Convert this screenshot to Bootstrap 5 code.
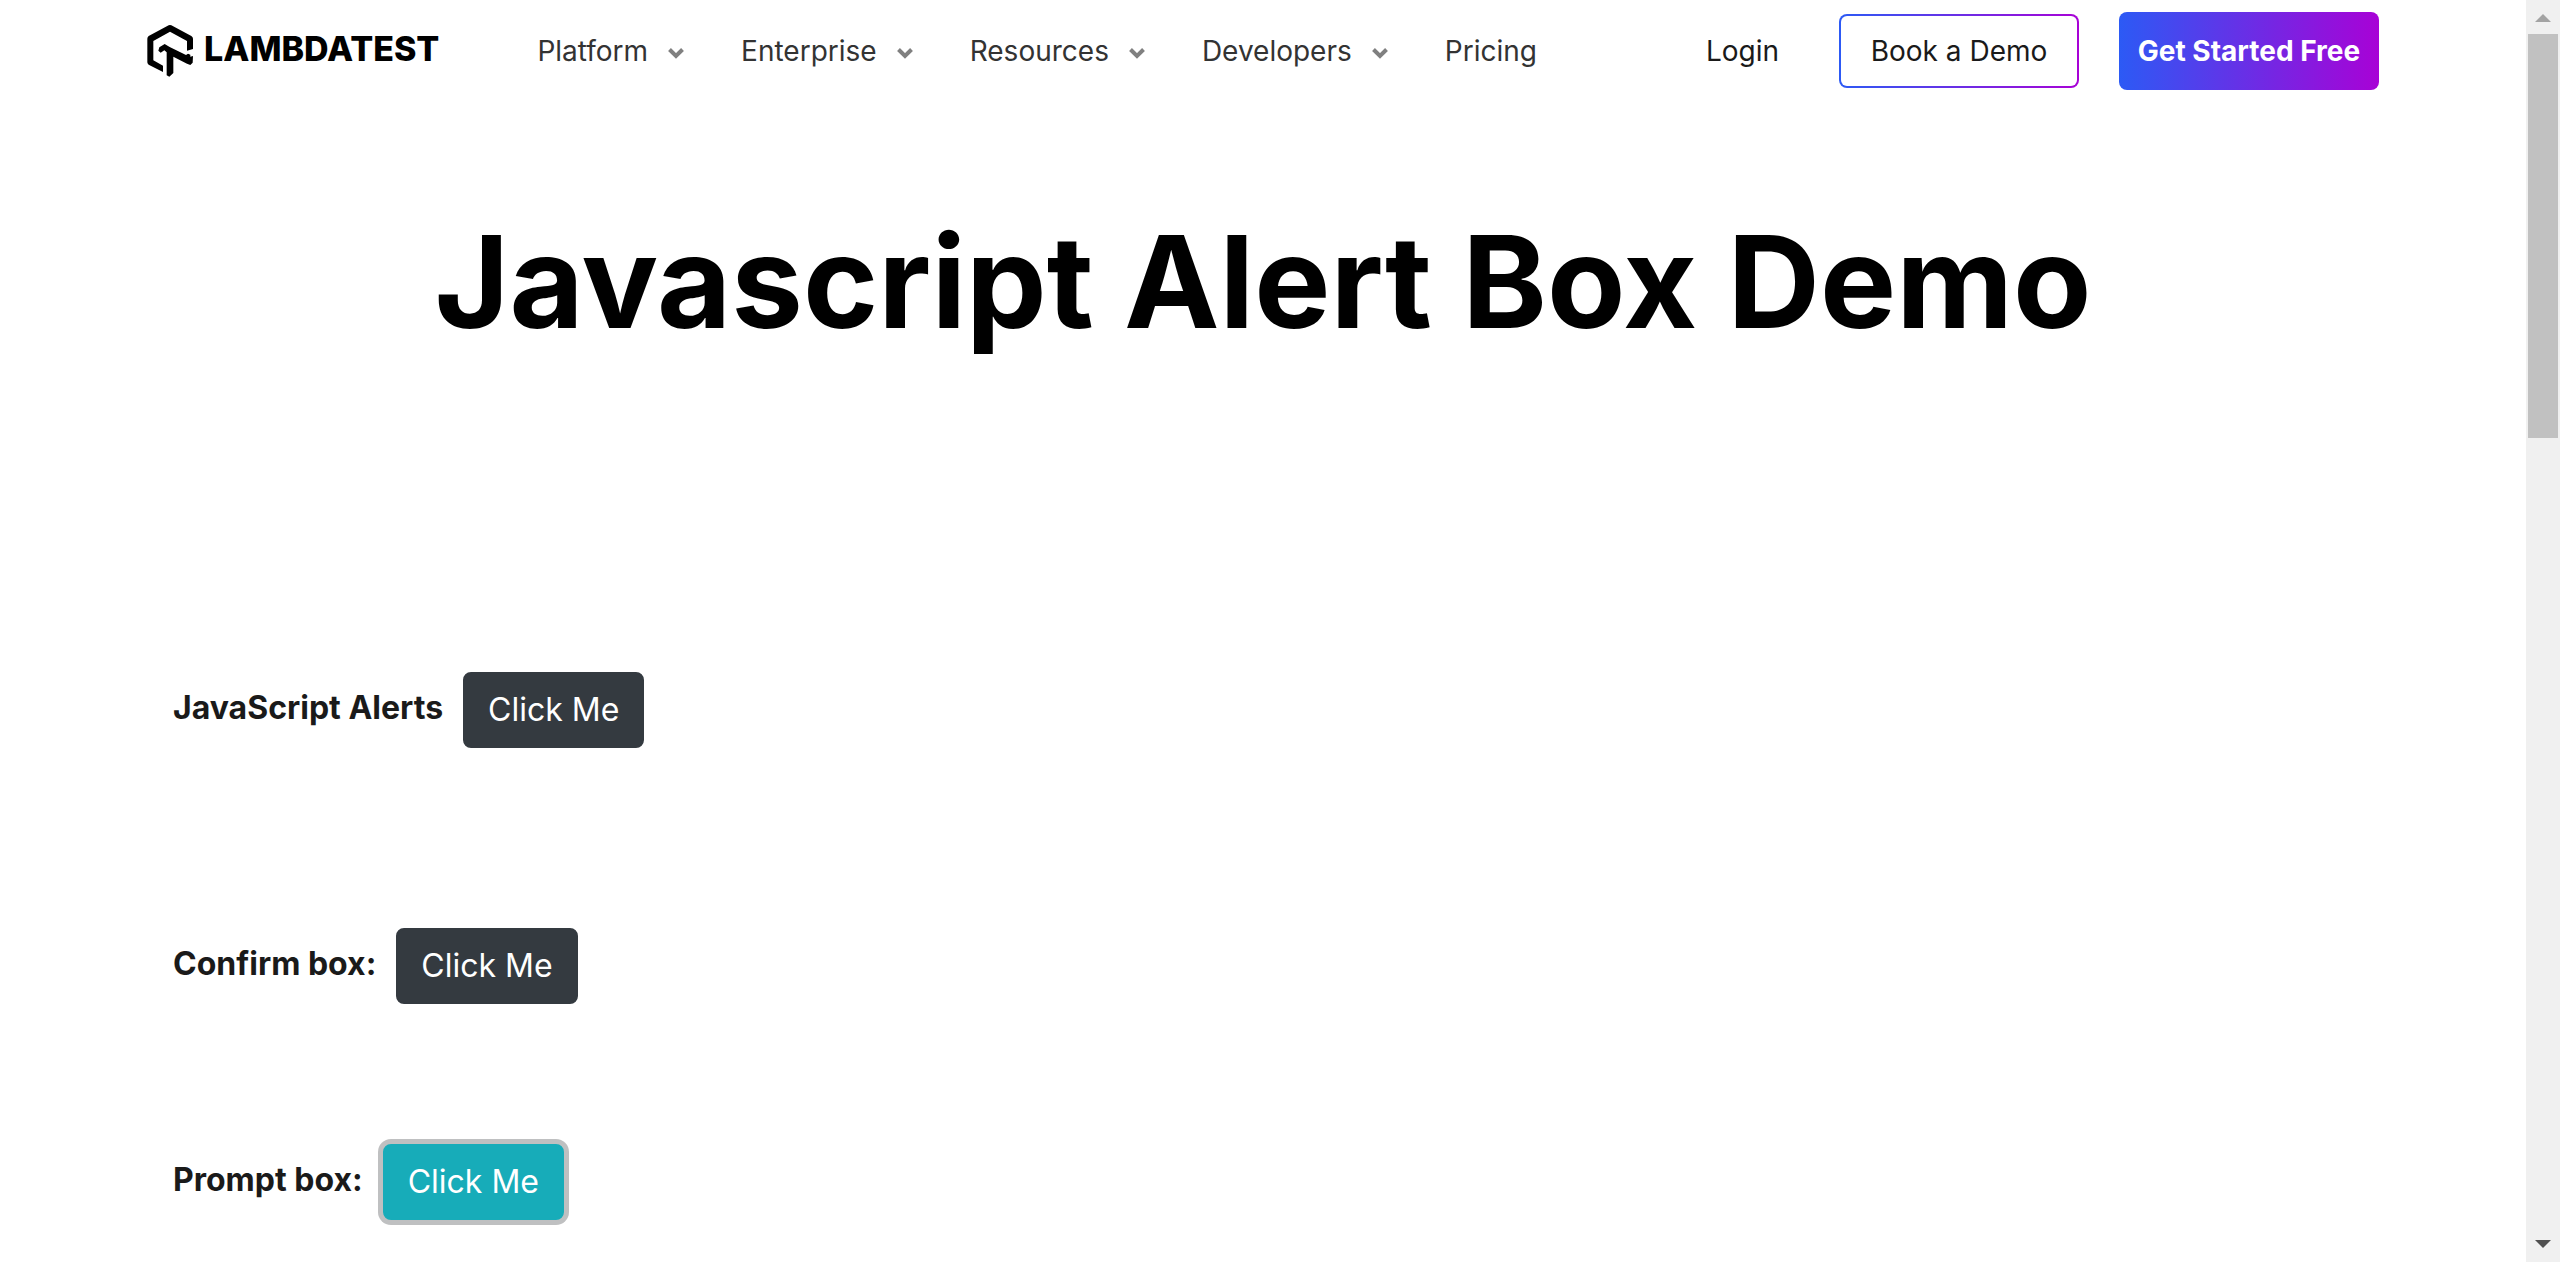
<!DOCTYPE html>
<html lang="en">
<head>
<meta charset="utf-8">
<meta name="viewport" content="width=device-width, initial-scale=1">
<title>Javascript Alert Box Demo</title>
<link href="https://cdn.jsdelivr.net/npm/bootstrap@5.3.0/dist/css/bootstrap.min.css" rel="stylesheet">
<style>
body { font-family: Inter, "Liberation Sans", sans-serif; font-size: 28px; color: #1a1a1a; background: #fff; }
.page-wrap { padding: 0 147px; }
.site-nav { height: 102px; }
.brand-name { font-size: 34px; line-height: 40px; font-weight: 800; color: #000; margin-left: 11px; padding-bottom: 4px; }
.menu-list { margin-left: 98px; gap: 57px; }
.menu-list a { color: #333; gap: 20px; line-height: 42px; }
.menu-list svg { margin-top: 4px; }
.login-link { color: #1a1a1a; margin-right: 60px; }
.btn-demo { width: 240px; height: 74px; border: 2px solid transparent; border-radius: 8px; font-size: 28px; color: #1a1a1a; padding: 0;
  background: linear-gradient(#fff, #fff) padding-box, linear-gradient(90deg, #2c5af5, #a802d6) border-box; }
.btn-start { width: 260px; height: 78px; border: 0; border-radius: 8px; font-size: 28px; font-weight: 700; color: #fff; padding: 0; margin-left: 40px;
  background: linear-gradient(90deg, #2c5af5, #a802d6); }
.demo-title { font-size: 128px; line-height: 160px; font-weight: 700; color: #000; padding-top: 100px; margin: 0 0 310px; }
.demo-row { padding-left: 26px; gap: 20px; font-size: 32px; line-height: 48px; margin-bottom: 180px; }
.demo-row.last-gap { margin-bottom: 140px; }
.demo-row label { font-weight: 700; padding-bottom: 4px; }
.btn-click { font-size: 32px; line-height: 48px; padding: 12px 23px; border: 2px solid #343a40; background: #343a40; color: #fff; border-radius: 8px; font-weight: 400; }
.btn-click.is-active { background: #17acb9; border-color: #17acb9; box-shadow: 0 0 0 5px #bfc0c1; }
.scroll-track { width: 34px; background: #f0f0f0; }
.scroll-track svg { display: block; }
.scroll-thumb { width: 30px; height: 32%; background: #c1c1c1; }
</style>
<script src="https://cdn.jsdelivr.net/npm/bootstrap@5.3.0/dist/js/bootstrap.bundle.min.js" defer></script>
</head>
<body>
<div class="d-flex vh-100 overflow-hidden">
  <div class="page-wrap flex-grow-1">
    <header class="site-nav d-flex align-items-center">
      <a href="#" class="d-flex align-items-center text-decoration-none">
        <svg width="46" height="52" viewBox="50 75 138 156" aria-hidden="true">
          <path d="M115 76Q119 74 123 76L183 108Q188 111 188 116V147L170 152V123L119 95L69 123V181L98 197V216L55 194Q51 191 51 187V116Q51 111 55 108Z"/>
          <path d="M84 152L87 142L103 132L118 141L167 165L173 161L180 164V170L188 168L187 188L180 195L170 191L129 170V219L117 230L109 226V157L102 151L91 158Z"/>
        </svg>
        <span class="brand-name">LAMBDATEST</span>
      </a>
      <nav aria-label="Main">
        <ul class="menu-list list-unstyled d-flex mb-0">
          <li><a href="#" class="d-flex align-items-center text-decoration-none">Platform<svg width="16" height="12" viewBox="0 0 16 12" aria-hidden="true"><path d="M1.5 2.5L8 9L14.5 2.5" fill="none" stroke="#808080" stroke-width="4"/></svg></a></li>
          <li><a href="#" class="d-flex align-items-center text-decoration-none">Enterprise<svg width="16" height="12" viewBox="0 0 16 12" aria-hidden="true"><path d="M1.5 2.5L8 9L14.5 2.5" fill="none" stroke="#808080" stroke-width="4"/></svg></a></li>
          <li><a href="#" class="d-flex align-items-center text-decoration-none">Resources<svg width="16" height="12" viewBox="0 0 16 12" aria-hidden="true"><path d="M1.5 2.5L8 9L14.5 2.5" fill="none" stroke="#808080" stroke-width="4"/></svg></a></li>
          <li><a href="#" class="d-flex align-items-center text-decoration-none">Developers<svg width="16" height="12" viewBox="0 0 16 12" aria-hidden="true"><path d="M1.5 2.5L8 9L14.5 2.5" fill="none" stroke="#808080" stroke-width="4"/></svg></a></li>
          <li><a href="#" class="d-flex align-items-center text-decoration-none">Pricing</a></li>
        </ul>
      </nav>
      <a href="#" class="login-link text-decoration-none ms-auto">Login</a>
      <button type="button" class="btn btn-demo">Book a Demo</button>
      <button type="button" class="btn btn-start">Get Started Free</button>
    </header>
    <main>
      <h1 class="demo-title text-center">Javascript Alert Box Demo</h1>
      <div class="demo-row d-flex align-items-center">
        <label for="alertBtn">JavaScript Alerts</label>
        <button type="button" id="alertBtn" class="btn btn-click">Click Me</button>
      </div>
      <div class="demo-row last-gap d-flex align-items-center">
        <label for="confirmBtn">Confirm box:</label>
        <button type="button" id="confirmBtn" class="btn btn-click">Click Me</button>
      </div>
      <div class="demo-row d-flex align-items-center">
        <label for="promptBtn">Prompt box:</label>
        <button type="button" id="promptBtn" class="btn btn-click is-active">Click Me</button>
      </div>
    </main>
  </div>
  <div class="scroll-track d-flex flex-column align-items-center flex-shrink-0" aria-hidden="true">
    <svg class="flex-shrink-0" width="34" height="34" viewBox="0 0 34 34"><path d="M9 22L17 14L25 22Z" fill="#a3a3a3"/></svg>
    <div class="scroll-thumb"></div>
    <svg class="mt-auto flex-shrink-0" width="34" height="34" viewBox="0 0 34 34"><path d="M9 12L17 20L25 12Z" fill="#505050"/></svg>
  </div>
</div>
</body>
</html>
